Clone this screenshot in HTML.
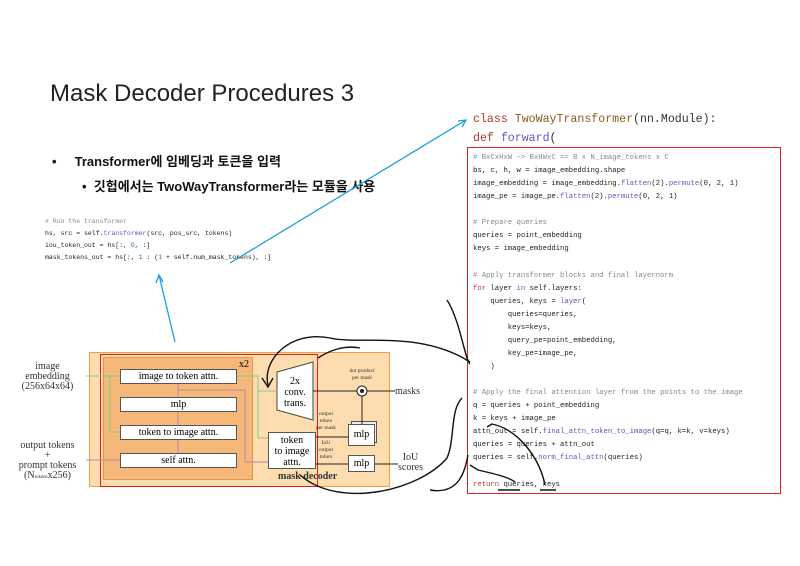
<!DOCTYPE html>
<html><head><meta charset="utf-8"><style>
body{margin:0;width:800px;height:566px;background:#fff;position:relative;overflow:hidden;font-family:"Liberation Sans","Noto Sans CJK KR",sans-serif}
.a{position:absolute}
.code{font-family:"Liberation Mono",monospace;white-space:pre;color:#222}
.c{color:#888}.k{color:#c0392b}.f{color:#6a4fc2}.n{color:#2a6fb0}
.bx{position:absolute;background:#fff;border:1px solid #555;font-family:"Liberation Serif",serif;font-size:10px;text-align:center;box-sizing:border-box}
.sr{font-family:"Liberation Serif",serif;color:#333;text-align:center;position:absolute}
</style></head><body>
<div class="a" style="left:50px;top:80px;font-size:24px;color:#222">Mask Decoder Procedures 3</div>
<div class="a" style="left:52px;top:151px;font-size:13px;font-weight:bold;color:#111">•&nbsp;&nbsp;&nbsp;&nbsp;&nbsp;Transformer에 임베딩과 토큰을 입력</div>
<div class="a" style="left:82px;top:176px;font-size:13px;font-weight:bold;color:#111">•&nbsp;&nbsp;깃헙에서는 TwoWayTransformer라는 모듈을 사용</div>
<div class="a code" style="left:45px;top:216px;font-size:6.5px;line-height:12px"><span class="c"># Run the transformer</span>
hs, src = self.<span class="f">transformer</span>(src, pos_src, tokens)
iou_token_out = hs[:, <span class="n">0</span>, :]
mask_tokens_out = hs[:, <span class="n">1</span> : (<span class="n">1</span> + self.num_mask_tokens), :]</div>
<div class="a code" style="left:473px;top:110px;font-size:11.6px;line-height:19px;color:#b0392b">class <span style="color:#8a5a1c">TwoWayTransformer</span><span style="color:#333">(nn.Module):</span>
def <span class="f">forward</span><span style="color:#333">(</span></div>
<div class="a" style="left:467px;top:147px;width:312px;height:345px;border:1.5px solid #e02020"></div>
<div class="a code" style="left:473px;top:152px;font-size:7.25px;line-height:13.07px"><span class="c"># BxCxHxW -> BxHWxC == B x N_image_tokens x C</span>
bs, c, h, w = image_embedding.shape
image_embedding = image_embedding.<span class="f">flatten</span>(2).<span class="f">permute</span>(0, 2, 1)
image_pe = image_pe.<span class="f">flatten</span>(2).<span class="f">permute</span>(0, 2, 1)

<span class="c"># Prepare queries</span>
queries = point_embedding
keys = image_embedding

<span class="c"># Apply transformer blocks and final layernorm</span>
<span class="k">for</span> layer <span class="f">in</span> self.layers:
    queries, keys = <span class="f">layer</span>(
        queries=queries,
        keys=keys,
        query_pe=point_embedding,
        key_pe=image_pe,
    )

<span class="c"># Apply the final attention layer from the points to the image</span>
q = queries + point_embedding
k = keys + image_pe
attn_out = self.<span class="f">final_attn_token_to_image</span>(q=q, k=k, v=keys)
queries = queries + attn_out
queries = self.<span class="f">norm_final_attn</span>(queries)

<span class="k">return</span> queries, keys</div>
<!-- diagram -->
<div class="a" style="left:89px;top:352px;width:301px;height:135px;background:#fddcb0;border:1px solid #f0a040;box-sizing:border-box"></div>
<div class="a" style="left:103px;top:357px;width:150px;height:123px;background:#f5b878;border:1px solid #e09850;box-sizing:border-box"></div>
<div class="a" style="left:100px;top:354px;width:218px;height:133px;border:1.5px solid #e02020;box-sizing:border-box"></div>
<div class="a" style="left:239px;top:359px;font-family:'Liberation Serif',serif;font-size:10px">x2</div>
<div class="bx" style="left:120px;top:369px;width:117px;height:15px;line-height:13px">image to token attn.</div>
<div class="bx" style="left:120px;top:397px;width:117px;height:15px;line-height:13px">mlp</div>
<div class="bx" style="left:120px;top:425px;width:117px;height:15px;line-height:13px">token to image attn.</div>
<div class="bx" style="left:120px;top:453px;width:117px;height:15px;line-height:13px">self attn.</div>
<div class="bx" style="left:268px;top:432px;width:48px;height:37px;line-height:11px;padding-top:2px">token<br>to image<br>attn.</div>
<div class="bx" style="left:351px;top:421px;width:26px;height:22px;background:#eee"></div>
<div class="bx" style="left:348px;top:424px;width:27px;height:22px;line-height:20px">mlp</div>
<div class="bx" style="left:348px;top:455px;width:27px;height:17px;line-height:15px">mlp</div>
<div class="sr" style="left:10px;top:362px;width:75px;font-size:10px;line-height:10px">image<br>embedding<br>(256x64x64)</div>
<div class="sr" style="left:10px;top:441px;width:75px;font-size:10px;line-height:10px">output tokens<br>+<br>prompt tokens<br>(N<span style="font-size:5px">tokens</span>x256)</div>
<div class="sr" style="left:395px;top:386px;font-size:10px">masks</div>
<div class="sr" style="left:398px;top:453px;font-size:10px;line-height:10px">IoU<br>scores</div>
<div class="sr" style="left:340px;top:368px;width:44px;font-size:5.5px;line-height:7px">dot product<br>per mask</div>
<div class="sr" style="left:312px;top:411px;width:28px;font-size:5.5px;line-height:7px">output<br>token<br>per mask</div>
<div class="sr" style="left:312px;top:440px;width:28px;font-size:5.5px;line-height:7px">IoU<br>output<br>token</div>
<div class="sr" style="left:278px;top:471px;font-size:10px;font-weight:bold">mask decoder</div>
<svg class="a" style="left:0;top:0" width="800" height="566">
<polygon points="277,372 313,362 313,420 277,410" fill="#fff" stroke="#444"/>
<text x="295" y="384" font-family="Liberation Serif" font-size="10" text-anchor="middle">2x</text>
<text x="295" y="395" font-family="Liberation Serif" font-size="10" text-anchor="middle">conv.</text>
<text x="295" y="406" font-family="Liberation Serif" font-size="10" text-anchor="middle">trans.</text>
<g stroke="#8c8" fill="none"><path d="M86,376 H120 M110,376 V432 H120 M237,376 H258 V391 H277 M258,391 V438 H268"/></g>
<g stroke="#b8a" fill="none"><path d="M86,460 H120 M178,453 V440 M178,425 V412 M178,397 V384 M178,390 H245 V462 H268"/></g>
<g stroke="#222" fill="none"><path d="M313,391 H357 M367,391 H395 M362,396 V424 M316,437 H348 M316,464 H348 M375,464 H398"/><circle cx="362" cy="391" r="5" fill="#fff"/><circle cx="362" cy="391" r="1.5" fill="#222"/></g>
<g stroke="#1aa0e0" stroke-width="1.3" fill="none"><path d="M230,263 L466,120 M458,121 L466,120 L462,127"/><path d="M175,342 L159,275 M156,283 L159,275 L163,282"/></g>
<g stroke="#111" stroke-width="1.4" fill="none">
<path d="M268,385 C262,360 290,330 330,338 C360,345 420,330 470,362"/><path d="M262,378 L268,387 L273,378"/>
<path d="M318,358 C330,350 345,345 360,348"/>
<path d="M300,475 C340,510 420,490 447,458 C455,440 450,410 462,398"/>
<path d="M447,300 C460,320 465,360 470,364"/>
<path d="M430,490 C460,495 465,470 468,455"/>
<path d="M470,465 L478,470 C500,475 510,478 515,482"/>
<path d="M498,490 H520 M540,490 H556"/>
<path d="M545,485 C540,460 520,430 492,424 L487,427"/>
</g>
</svg>
</body></html>
